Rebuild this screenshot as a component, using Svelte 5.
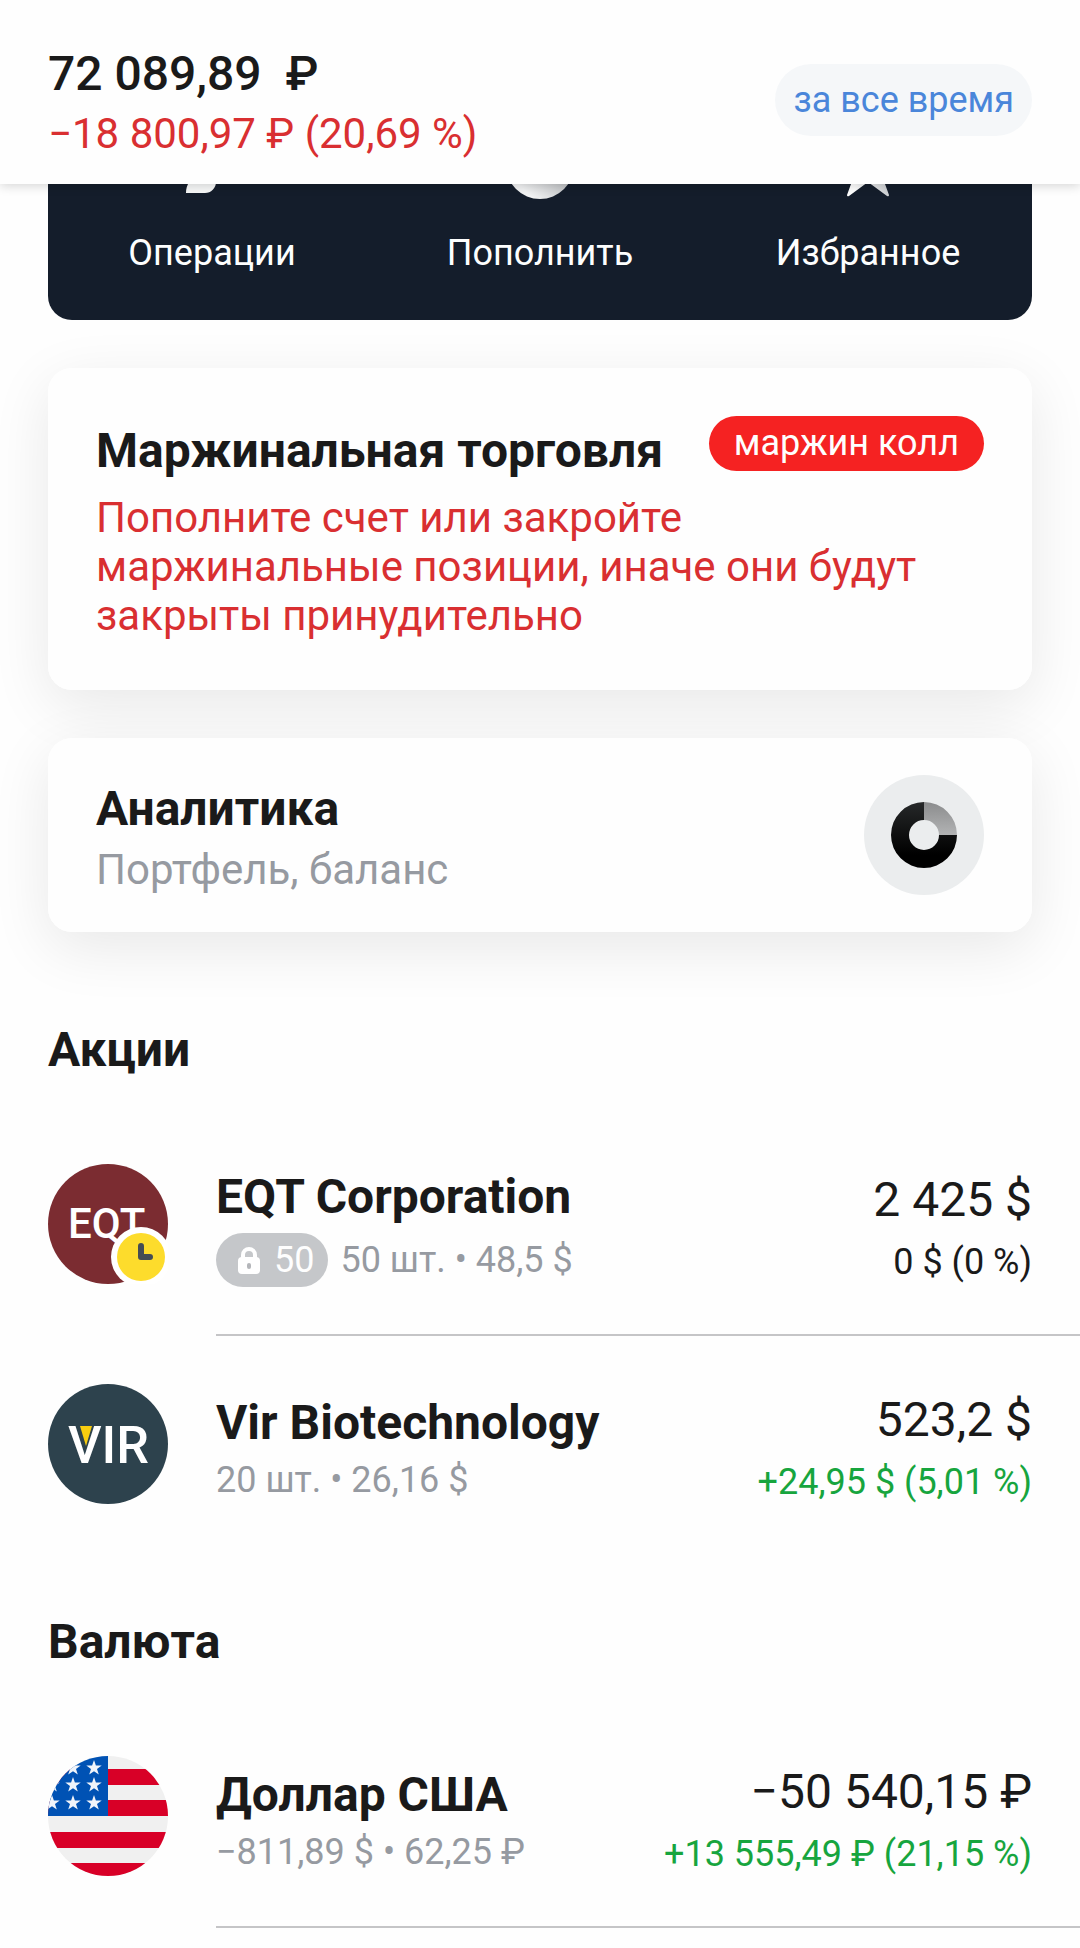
<script lang="ts">
	type Tone = 'flat' | 'up';
	type Holding = {
		logo: 'eqt' | 'vir' | 'usd';
		name: string;
		locked?: number;
		meta: string;
		price: string;
		change: string;
		tone: Tone;
		divider: boolean;
	};

	const actions: { id: string; label: string }[] = [
		{ id: 'operations', label: 'Операции' },
		{ id: 'deposit', label: 'Пополнить' },
		{ id: 'favorites', label: 'Избранное' }
	];

	const groups: { title: string; items: Holding[] }[] = [
		{
			title: 'Акции',
			items: [
				{
					logo: 'eqt',
					name: 'EQT Corporation',
					locked: 50,
					meta: '50 шт. • 48,5 $',
					price: '2 425 $',
					change: '0 $ (0 %)',
					tone: 'flat',
					divider: true
				},
				{
					logo: 'vir',
					name: 'Vir Biotechnology',
					meta: '20 шт. • 26,16 $',
					price: '523,2 $',
					change: '+24,95 $ (5,01 %)',
					tone: 'up',
					divider: false
				}
			]
		},
		{
			title: 'Валюта',
			items: [
				{
					logo: 'usd',
					name: 'Доллар США',
					meta: '−811,89 $ • 62,25 ₽',
					price: '−50 540,15 ₽',
					change: '+13 555,49 ₽ (21,15 %)',
					tone: 'up',
					divider: true
				}
			]
		}
	];

	const stripes = [13, 44, 76, 107];
	const starRows = [12, 29, 47];
	const starCols = [4, 25, 46];
</script>

<header class="summary">
	<div>
		<p class="total">72 089,89&nbsp;&nbsp;₽</p>
		<p class="loss">−18 800,97 ₽ (20,69 %)</p>
	</div>
	<button type="button" class="period">за все время</button>
</header>

<main>
	<div class="cards">
		<nav class="actions">
			{#each actions as action}
				<button type="button" class="action">
					<svg class="action-icon" viewBox="0 0 72 72" aria-hidden="true">
						<defs>
							<linearGradient id="coin" x1="0" y1="1" x2="1" y2="0">
								<stop offset="0.2" stop-color="#f2f3f4" />
								<stop offset="0.9" stop-color="#8d9094" />
							</linearGradient>
							<linearGradient id="star" x1="0" y1="0" x2="1" y2="0">
								<stop offset="0.3" stop-color="#ffffff" />
								<stop offset="0.9" stop-color="#c4c7cb" />
							</linearGradient>
						</defs>
						{#if action.id === 'operations'}
							<path d="M14 8h26v45a11 11 0 0 1-11 11H10q0-7 4-12z" fill="#f7f8f8" />
						{:else if action.id === 'deposit'}
							<circle cx="36" cy="36" r="34" fill="url(#coin)" />
							<path d="M36 22v28M22 36h28" stroke="#141d2b" stroke-width="5" />
						{:else}
							<path
								d="M36 5l8 24h25L49 44l8 22q0 2-2 1L36 53 17 67q-2 1-2-1l8-22L3 29h25z"
								fill="url(#star)"
							/>
						{/if}
					</svg>
					{action.label}
				</button>
			{/each}
		</nav>

		<section class="card margin">
			<div class="card-head">
				<h2>Маржинальная торговля</h2>
				<span class="alert">маржин колл</span>
			</div>
			<p class="warning">Пополните счет или закройте маржинальные позиции, иначе они будут закрыты принудительно</p>
		</section>

		<section class="card analytics">
			<div class="analytics-text">
				<h2>Аналитика</h2>
				<p class="caption">Портфель, баланс</p>
			</div>
			<svg class="chart" viewBox="0 0 120 120" aria-hidden="true">
				<defs>
					<linearGradient id="ring" x1="0" y1="0" x2="0" y2="1">
						<stop offset="0" stop-color="#262829" />
						<stop offset="0.8" stop-color="#000000" />
					</linearGradient>
					<linearGradient id="slice" x1="0" y1="0" x2="0" y2="1">
						<stop offset="0" stop-color="#8b8c8d" />
						<stop offset="1" stop-color="#b2b3b4" />
					</linearGradient>
				</defs>
				<circle cx="60" cy="60" r="60" fill="#ebedee" />
				<path d="M60 27a33 33 0 1 0 33 33H75a15 15 0 1 1-15-15z" fill="url(#ring)" />
				<path d="M60 27a33 33 0 0 1 33 33H75a15 15 0 0 0-15-15z" fill="url(#slice)" />
			</svg>
		</section>
	</div>

	{#each groups as group}
		<section class="group">
			<h2>{group.title}</h2>
			<ul>
				{#each group.items as item}
					<li class="row">
						<svg class="logo" viewBox="0 0 120 120" aria-hidden="true">
							{#if item.logo === 'eqt'}
								<circle cx="60" cy="60" r="60" fill="#7b2c31" />
								<text x="20" y="74" class="mark eqt">EQT</text>
								<circle cx="93" cy="93" r="30" fill="#ffffff" />
								<circle cx="93" cy="93" r="24" fill="#fddc2c" />
								<path
									d="M93 82v11h9"
									fill="none"
									stroke="#444c54"
									stroke-width="6"
									stroke-linecap="round"
									stroke-linejoin="round"
								/>
							{:else if item.logo === 'vir'}
								<circle cx="60" cy="60" r="60" fill="#2d424d" />
								<text x="20" y="79" class="mark vir">VIR</text>
								<path d="M32 42h12l-6 20z" fill="#f8cd0f" />
							{:else}
								<clipPath id="flag"><circle cx="60" cy="60" r="60" /></clipPath>
								<g clip-path="url(#flag)">
									<rect width="120" height="120" fill="#f0f0f0" />
									{#each stripes as y}
										<rect {y} width="120" height="16" fill="#d80027" />
									{/each}
									<rect width="60" height="60" fill="#0052b4" />
									{#each starRows as y}
										{#each starCols as x}
											<path
												transform="translate({x} {y})"
												d="M0-8l1.9 5.5h5.8L3 1l1.8 5.6L0 3.2l-4.8 3.4L-3 1l-4.7-3.5h5.8z"
												fill="#f0f4fa"
											/>
										{/each}
									{/each}
								</g>
							{/if}
						</svg>
						<div class="body" class:divider={item.divider}>
							<div class="info">
								<h3>{item.name}</h3>
								<p class="meta">
									{#if item.locked}
										<span class="lock">
											<svg width="22" height="27" viewBox="0 0 22 27" aria-hidden="true">
												<path
													d="M5 12V8a6 6 0 0 1 12 0v4"
													fill="none"
													stroke="#ffffff"
													stroke-width="4"
												/>
												<rect y="10" width="22" height="17" rx="4" fill="#ffffff" />
												<rect x="9" y="16" width="4" height="6" rx="2" fill="#b4b6ba" />
											</svg>
											{item.locked}
										</span>
									{/if}
									{item.meta}
								</p>
							</div>
							<div class="value">
								<p class="price">{item.price}</p>
								<p class="change" class:up={item.tone === 'up'}>{item.change}</p>
							</div>
						</div>
					</li>
				{/each}
			</ul>
		</section>
	{/each}
</main>

<style>
	:global(body) {
		margin: 0;
		background: #fefefe;
		color: #1a1a1a;
		font-family: Roboto, 'Noto Sans', sans-serif;
	}

	h2,
	h3,
	p,
	ul {
		margin: 0;
		padding: 0;
	}

	h2,
	h3 {
		font-size: 48px;
		line-height: 56px;
		font-weight: 700;
	}

	button {
		border: none;
		font-family: inherit;
		font-size: 36px;
		cursor: pointer;
	}

	/* ── Summary bar ──────────────────────────────────────── */
	.summary {
		position: sticky;
		top: 0;
		z-index: 10;
		display: flex;
		align-items: center;
		justify-content: space-between;
		padding: 46px 48px 26px;
		background: #fefefe;
		box-shadow: 0 2px 10px rgba(0, 0, 0, 0.16);
	}

	.total {
		font-size: 48px;
		line-height: 56px;
		font-weight: 500;
	}

	.loss {
		margin-top: 7px;
		font-size: 42px;
		line-height: 49px;
		color: #d92f31;
	}

	.period {
		height: 72px;
		margin-bottom: 4px;
		padding: 0 18px;
		border-radius: 36px;
		background: #f5f7f9;
		color: #4a86da;
	}

	/* ── Cards ────────────────────────────────────────────── */
	.cards {
		display: flex;
		flex-direction: column;
		gap: 48px;
		isolation: isolate;
		margin: -84px 48px 0;
		padding-bottom: 30px;
	}

	.actions {
		display: grid;
		grid-template-columns: repeat(3, 1fr);
		padding: 29px 0 43px;
		border-radius: 24px;
		background: #141d2b;
	}

	.action {
		display: flex;
		flex-direction: column;
		align-items: center;
		gap: 28px;
		padding: 0;
		background: none;
		color: #fdfefe;
		line-height: 48px;
	}

	.action-icon {
		width: 72px;
		height: 72px;
	}

	.card {
		position: relative;
		border-radius: 24px;
		background: #fefefe;
	}

	/* shadow sits under every card, so neighbours stay clean */
	.card::before {
		content: '';
		position: absolute;
		inset: 0;
		z-index: -1;
		border-radius: 24px;
		box-shadow: 0 16px 60px rgba(0, 0, 0, 0.09);
	}

	.margin {
		padding: 48px 48px 50px;
	}

	.card-head {
		display: flex;
		align-items: flex-start;
		justify-content: space-between;
	}

	.card-head h2 {
		padding-top: 7px;
	}

	.alert {
		padding: 0 25px;
		border-radius: 28px;
		background: #f52222;
		color: #fefefe;
		font-size: 36px;
		line-height: 55px;
	}

	.warning {
		margin-top: 14px;
		font-size: 42px;
		line-height: 49px;
		color: #d92f31;
	}

	.analytics {
		display: flex;
		align-items: center;
		justify-content: space-between;
		padding: 37px 48px;
	}

	.analytics-text {
		padding-top: 4px;
	}

	.caption {
		margin-top: 8px;
		font-size: 42px;
		line-height: 49px;
		color: #969aa1;
	}

	.chart,
	.logo {
		flex: none;
		width: 120px;
		height: 120px;
	}

	/* ── Holdings ─────────────────────────────────────────── */
	.group {
		padding: 60px 0 0 48px;
	}

	.group ul {
		margin-top: 38px;
		list-style: none;
	}

	.row {
		display: flex;
		gap: 48px;
	}

	.logo {
		margin-top: 48px;
	}

	.mark {
		font-family: Roboto, sans-serif;
		font-weight: 500;
		fill: #ffffff;
	}

	.eqt {
		font-size: 42px;
	}

	.vir {
		font-size: 52px;
	}

	.body {
		flex: 1;
		display: flex;
		align-items: center;
		justify-content: space-between;
		min-height: 128px;
		padding: 44px 48px 46px 0;
	}

	.divider {
		border-bottom: 2px solid #c5c5c7;
	}

	.info {
		padding-top: 8px;
	}

	.meta {
		display: flex;
		align-items: center;
		gap: 12px;
		margin-top: 8px;
		font-size: 36px;
		line-height: 42px;
		color: #969aa1;
	}

	.lock {
		display: flex;
		align-items: center;
		gap: 14px;
		padding: 0 14px 0 22px;
		border-radius: 27px;
		background: #c5c7ca;
		color: #fefefe;
		line-height: 54px;
	}

	.value {
		padding-top: 7px;
		text-align: right;
	}

	.price {
		font-size: 48px;
		line-height: 56px;
	}

	.change {
		margin-top: 13px;
		font-size: 36px;
		line-height: 42px;
	}

	.up {
		color: #17a53e;
	}
</style>
